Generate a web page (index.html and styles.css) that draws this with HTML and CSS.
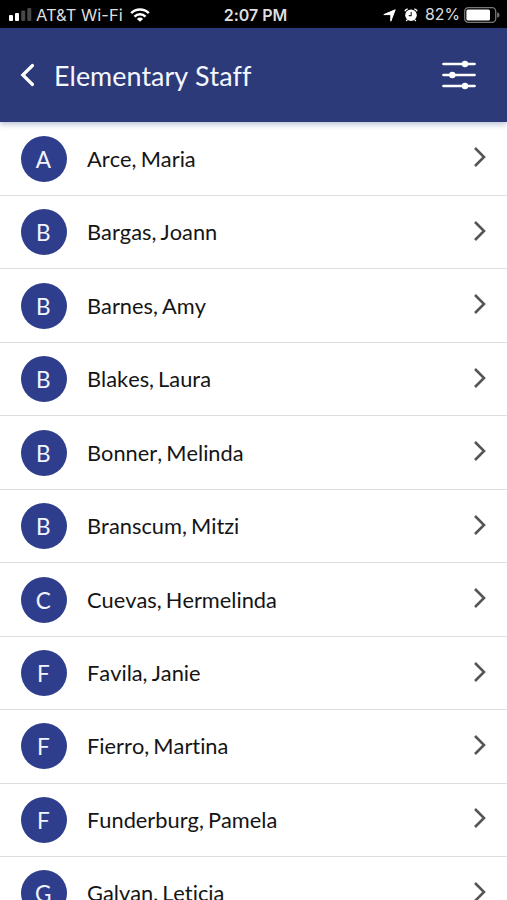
FILE: index.html
```html
<!DOCTYPE html>
<html lang="en">
	<head>
		<meta charset="UTF-8">
		<meta name="viewport" content="width=device-width, initial-scale=1.0">
		<title>Elementary Staff</title>
		<link rel="stylesheet" href="styles.css">
	</head>
	<body>
		<svg width="0" height="0" class="defs">
			<symbol id="chevron" viewBox="0 0 14 22">
				<path d="M2 2l9 9-9 9" fill="none" stroke="currentColor" stroke-width="2.6" />
			</symbol>
		</svg>

		<div class="status-bar">
			<div class="status-left">
				<svg class="signal" width="23" height="13" viewBox="0 0 23 13" fill="#fff">
					<rect x="0" y="7" width="4" height="6" rx="1" />
					<rect x="6" y="5" width="4" height="8" rx="1" />
					<rect x="12.2" y="2.5" width="4" height="10.5" rx="1" fill="#484848" />
					<rect x="18.3" y="0" width="4" height="13" rx="1" fill="#484848" />
				</svg>
				<span class="carrier">AT&amp;T Wi-Fi</span>
				<svg class="wifi" width="20" height="14" viewBox="0 0 20 14" fill="none" stroke="#fff" stroke-width="2.5">
					<path d="M1.2 5.2a12.6 12.6 0 0 1 17.6 0" />
					<path d="M4.5 8.6a7.8 7.8 0 0 1 11 0" />
					<path d="M10 13.8L6.9 10.9a4.4 4.4 0 0 1 6.2 0z" fill="#fff" stroke="none" />
				</svg>
			</div>
			<div class="clock">2:07 PM</div>
			<div class="status-right">
				<svg class="location" width="13" height="13" viewBox="0 0 13 13" fill="#fff" stroke="#fff" stroke-linejoin="round">
					<path d="M12.2.8L7.8 12.2V5.6H.8z" />
				</svg>
				<svg class="alarm" width="14" height="14" viewBox="0 0 14 14">
					<path d="M.8 3.3A4 4 0 0 1 3.7.8M13.2 3.3A4 4 0 0 0 10.3.8M3.2 11.8l-1 1.2M10.8 11.8l1 1.2" fill="none" stroke="#fff" stroke-width="1.3" />
					<circle cx="7" cy="7.2" r="5.8" fill="#fff" />
					<path d="M7.2 4v3.6H4.7" fill="none" stroke="#222" stroke-width="1.1" />
				</svg>
				<span class="percent">82%</span>
				<svg class="battery" width="36" height="16" viewBox="0 0 36 16">
					<rect x=".7" y=".7" width="31" height="14.6" rx="3.6" fill="none" stroke="#777" stroke-width="1.3" />
					<rect x="2.4" y="2.4" width="23.6" height="11.2" rx="1.6" fill="#fff" />
					<path d="M33.2 5.2q2.3.7 2.3 2.8t-2.3 2.8z" fill="#777" />
				</svg>
			</div>
		</div>

		<header class="header">
			<svg class="back" width="16" height="24" viewBox="0 0 16 24">
				<path d="M13.5 2.5L3.8 12l9.7 9.5" fill="none" stroke="#fff" stroke-width="3.2" stroke-linecap="round" />
			</svg>
			<h1>Elementary Staff</h1>
			<svg class="filter" width="34" height="30" viewBox="0 0 34 30" fill="#fff">
				<path d="M1.5 4h31M1.5 15h31M1.5 26h31" stroke="#fff" stroke-width="2.7" stroke-linecap="round" />
				<circle cx="23" cy="4" r="3.2" />
				<circle cx="10.3" cy="15" r="3.2" />
				<circle cx="23" cy="26" r="3.2" />
			</svg>
		</header>

		<ul class="staff-list">
			<li><span class="avatar">A</span><span class="name">Arce, Maria</span><svg class="chevron"><use href="#chevron" /></svg></li>
			<li><span class="avatar">B</span><span class="name">Bargas, Joann</span><svg class="chevron"><use href="#chevron" /></svg></li>
			<li><span class="avatar">B</span><span class="name">Barnes, Amy</span><svg class="chevron"><use href="#chevron" /></svg></li>
			<li><span class="avatar">B</span><span class="name">Blakes, Laura</span><svg class="chevron"><use href="#chevron" /></svg></li>
			<li><span class="avatar">B</span><span class="name">Bonner, Melinda</span><svg class="chevron"><use href="#chevron" /></svg></li>
			<li><span class="avatar">B</span><span class="name">Branscum, Mitzi</span><svg class="chevron"><use href="#chevron" /></svg></li>
			<li><span class="avatar">C</span><span class="name">Cuevas, Hermelinda</span><svg class="chevron"><use href="#chevron" /></svg></li>
			<li><span class="avatar">F</span><span class="name">Favila, Janie</span><svg class="chevron"><use href="#chevron" /></svg></li>
			<li><span class="avatar">F</span><span class="name">Fierro, Martina</span><svg class="chevron"><use href="#chevron" /></svg></li>
			<li><span class="avatar">F</span><span class="name">Funderburg, Pamela</span><svg class="chevron"><use href="#chevron" /></svg></li>
			<li><span class="avatar">G</span><span class="name">Galvan, Leticia</span><svg class="chevron"><use href="#chevron" /></svg></li>
		</ul>
	</body>
</html>
```
FILE: styles.css
```css
* {
    box-sizing: border-box;
}

body {
    margin: 0;
    height: 900px;
    overflow: hidden;
    background-color: #ffffff;
    color: #151515;
    font-family: Lato, "Liberation Sans", sans-serif;
    font-variant-ligatures: none;
    font-kerning: none;
}

svg {
    display: block;
    flex: none;
}

.defs {
    position: absolute;
}

.status-bar {
    display: grid;
    grid-template-columns: 1fr auto 1fr;
    align-items: center;
    height: 28px;
    padding: 2px 7px 0 9px;
    background-color: #000000;
    color: #dedede;
    font-family: Inter, "Liberation Sans", sans-serif;
    font-size: 16.5px;
    font-kerning: normal;
    line-height: 26px;
    white-space: nowrap;
}

.status-left,
.status-right {
    display: flex;
    align-items: center;
}

.status-right {
    justify-content: flex-end;
}

.signal {
    margin-bottom: 1px;
}

.carrier {
    margin-left: 4px;
    width: 94px;
}

.wifi {
    margin-bottom: 1px;
}

.clock {
    padding-left: 2px;
    font-size: 16px;
    font-weight: 600;
}

.alarm {
    margin-left: 8px;
}

.percent {
    margin: 0 4px 0 7px;
    font-size: 15.8px;
}

.header {
    position: relative;
    display: flex;
    align-items: center;
    height: 94px;
    padding: 0 31px 0 19px;
    background-color: #2c3a7a;
    color: #f4f7ff;
    box-shadow: 0 2px 6px rgba(44, 58, 122, 0.35);
}

h1 {
    flex: 1;
    margin: 2px 0 0 19px;
    font-size: 26.9px;
    font-weight: 400;
    line-height: 32px;
}

.staff-list {
    margin: 0;
    padding: 0.5px 0 0;
    list-style: none;
}

.staff-list li {
    display: flex;
    align-items: center;
    height: 73.47px;
    padding: 0 20px 0 21px;
    border-bottom: 1px solid #dedede;
}

.avatar {
    width: 46px;
    height: 46px;
    padding-right: 1.5px;
    border-radius: 50%;
    background-color: #2f3e8c;
    color: #f2f5ff;
    font-size: 22.5px;
    line-height: 47px;
    text-align: center;
}

.name {
    flex: 1;
    margin-left: 20px;
    font-size: 21.8px;
    line-height: 30px;
    word-spacing: -1.5px;
}

.chevron {
    width: 14px;
    height: 22px;
    margin-bottom: 3px;
    color: #555555;
}
```
